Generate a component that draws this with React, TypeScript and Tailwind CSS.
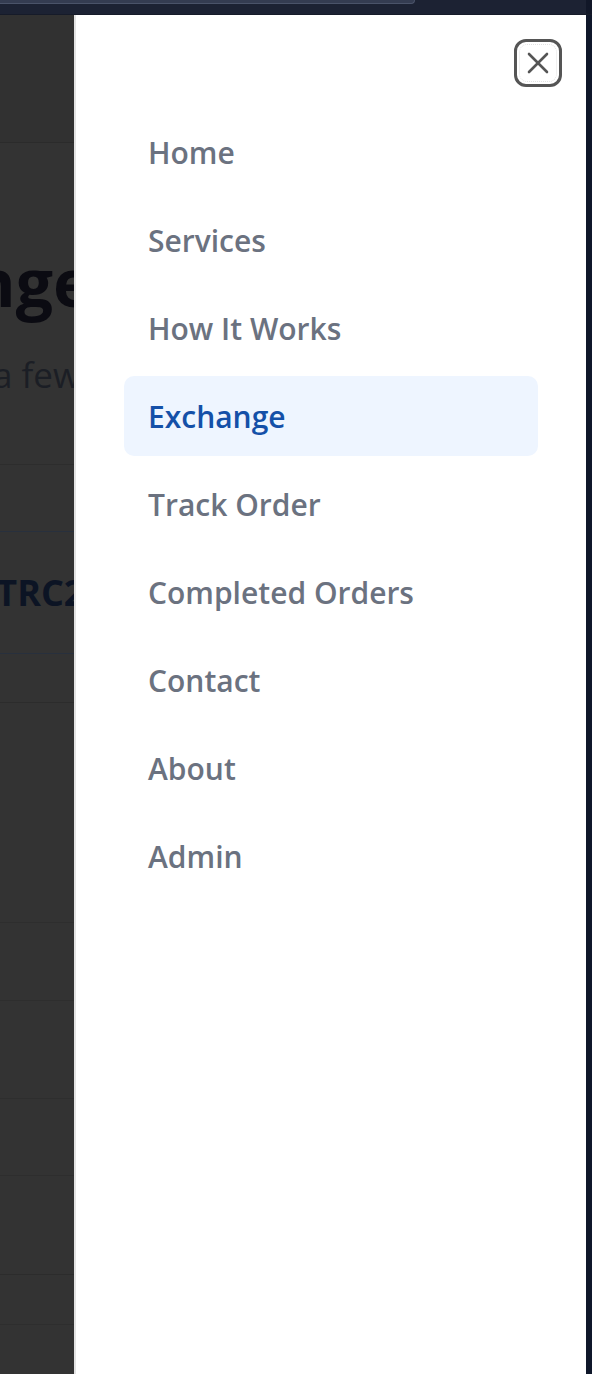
const NAV_ITEMS = [
  'Home',
  'Services',
  'How It Works',
  'Exchange',
  'Track Order',
  'Completed Orders',
  'Contact',
  'About',
  'Admin',
];

const ACTIVE = 'Exchange';

// page behind the overlay, only the left edge of it shows
function BackdropPage() {
  return (
    <div className="flex w-[74px] shrink-0 flex-col overflow-hidden bg-[#333333]">
      <div className="h-[128px] shrink-0 border-b border-[#2b2b2b] bg-[#313131]" />
      <div className="h-[88px] shrink-0" />
      <div className="flex h-[100px] shrink-0 items-center justify-end">
        <span className="mr-[-18px] whitespace-nowrap text-[66px] font-bold leading-none text-[#0b0b12]">
          Exchange
        </span>
      </div>
      <div className="flex h-[61px] shrink-0 items-start justify-end pt-[26px]">
        <span className="mr-[-6px] whitespace-nowrap text-[35px] leading-none text-[#1b1e25]">
          in a few
        </span>
      </div>
      <div className="h-[73px] shrink-0 border-b border-[#2d2d2d]" />
      <div className="h-[66px] shrink-0" />
      <div className="flex h-[123px] shrink-0 items-center justify-end border-y border-[#28303d]">
        <span className="mr-[-31px] whitespace-nowrap text-[36px] font-bold leading-none text-[#0c1424]">
          USDT TRC20
        </span>
      </div>
      <div className="h-[49px] shrink-0 border-b border-[#2c2c2c]" />
      <div className="h-[220px] shrink-0 border-b border-[#2e2e2e]" />
      <div className="h-[78px] shrink-0 border-b border-[#2e2e2e]" />
      <div className="h-[98px] shrink-0 border-b border-[#2e2e2e]" />
      <div className="h-[77px] shrink-0 border-b border-[#2e2e2e]" />
      <div className="h-[99px] shrink-0 border-b border-[#2c2c2c]" />
      <div className="h-[50px] shrink-0 border-b border-[#2e2e2e]" />
      <div className="flex-1" />
    </div>
  );
}

function CloseButton() {
  return (
    <button
      type="button"
      className="flex h-[48px] w-[48px] items-center justify-center rounded-[12px] border-[3px] border-[#555555] bg-white p-[2px]"
    >
      <span className="flex h-full w-full items-center justify-center rounded-[8px] border border-dotted border-[#e2e2e2]">
        <svg width="26" height="26" viewBox="0 0 26 26" fill="none" stroke="#555555" strokeWidth="2.6" strokeLinecap="round">
          <path d="M4 4L22 22" />
          <path d="M22 4L4 22" />
        </svg>
      </span>
    </button>
  );
}

export default function App() {
  return (
    <div
      className="flex h-[1374px] w-[592px] flex-col overflow-hidden bg-[#1c2233]"
      style={{ fontFamily: '"Open Sans", "Noto Sans", sans-serif' }}
    >
      {/* browser chrome strip */}
      <div className="flex h-[15px] shrink-0 border-b border-[#161b29]">
        <div className="flex flex-1 flex-col">
          <div className="h-[4px] w-[415px] rounded-br-[6px] border-b border-r border-[#4a5369] bg-[#343c51]" />
        </div>
        <div className="w-[6px] bg-[#111728]" />
      </div>

      <div className="flex min-h-0 flex-1">
        <BackdropPage />

        {/* drawer */}
        <aside className="flex flex-1 flex-col border-l-2 border-[#e3e3e3] bg-white">
          <div className="flex justify-end pr-6 pt-6">
            <CloseButton />
          </div>

          <nav className="mt-[25px] flex flex-col gap-2 px-12">
            {NAV_ITEMS.map((item) => (
              <a
                key={item}
                href="#"
                className={`flex h-[80px] items-center rounded-[10px] px-6 text-[30px] font-semibold ${
                  item === ACTIVE ? 'bg-[#eef5ff] text-[#1450a8]' : 'text-[#6b7280]'
                }`}
              >
                {item}
              </a>
            ))}
          </nav>
        </aside>

        <div className="w-[6px] shrink-0 bg-[#0f172a]" />
      </div>
    </div>
  );
}
